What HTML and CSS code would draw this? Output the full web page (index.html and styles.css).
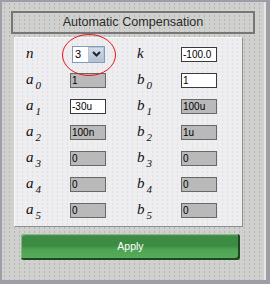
FILE: index.html
```html
<!DOCTYPE html>
<html lang="en">
<head>
    <meta charset="UTF-8">
    <title>Automatic Compensation</title>
    <link rel="stylesheet" href="styles.css">
</head>
<body>
    <div class="frame">
        <div class="title">Automatic Compensation</div>
        <div class="panel">
            <div class="grid">
                <div class="lbl">n</div>
                <div class="select">
                    <span class="val">3</span>
                    <span class="drop">
                        <svg width="9" height="6" viewBox="0 0 9 6"><path d="M1 1 L4.5 4.5 L8 1" fill="none" stroke="#1c2430" stroke-width="2"/></svg>
                    </span>
                </div>
                <div class="lbl">k</div>
                <input class="box" type="text" value="-100.0">

                <div class="lbl">a<sub>0</sub></div>
                <input class="box off" type="text" value="1" readonly>
                <div class="lbl">b<sub>0</sub></div>
                <input class="box" type="text" value="1">

                <div class="lbl">a<sub>1</sub></div>
                <input class="box" type="text" value="-30u">
                <div class="lbl">b<sub>1</sub></div>
                <input class="box off" type="text" value="100u" readonly>

                <div class="lbl">a<sub>2</sub></div>
                <input class="box off" type="text" value="100n" readonly>
                <div class="lbl">b<sub>2</sub></div>
                <input class="box off" type="text" value="1u" readonly>

                <div class="lbl">a<sub>3</sub></div>
                <input class="box off" type="text" value="0" readonly>
                <div class="lbl">b<sub>3</sub></div>
                <input class="box off" type="text" value="0" readonly>

                <div class="lbl">a<sub>4</sub></div>
                <input class="box off" type="text" value="0" readonly>
                <div class="lbl">b<sub>4</sub></div>
                <input class="box off" type="text" value="0" readonly>

                <div class="lbl">a<sub>5</sub></div>
                <input class="box off" type="text" value="0" readonly>
                <div class="lbl">b<sub>5</sub></div>
                <input class="box off" type="text" value="0" readonly>
            </div>
            <!-- red marker round the order selector -->
            <svg class="mark" width="58" height="46" viewBox="0 0 58 46">
                <ellipse cx="29" cy="22" rx="26.5" ry="20.5" fill="none" stroke="#e8141a" stroke-width="1"/>
            </svg>
        </div>
        <button class="apply">Apply</button>
    </div>
</body>
</html>
```

FILE: styles.css
```css
html, body {
    margin: 0;
    padding: 0;
}
body {
    width: 270px;
    height: 284px;
    background-color: #9e9ea6;
    font-family: "Liberation Sans", Arial, sans-serif;
    overflow: hidden;
}
.frame {
    margin: 2px 4px 4px 2px;
    height: 278px;
    padding: 9px 9px 0 9px;
    box-sizing: border-box;
    border-right: 2px solid #e6e6e6;
    background-color: #d0d1cd;
    background-image: radial-gradient(circle, #b3b4c2 0.7px, transparent 1px);
    background-size: 5px 4px;
}
.title {
    height: 23px;
    box-sizing: border-box;
    border: 2px solid #767676;
    text-align: center;
    font-size: 12.6px;
    line-height: 19px;
    color: #2a2a2a;
}
.panel {
    position: relative;
    margin: 3px 12px 0 3px;
    height: 190px;
    box-sizing: border-box;
    border: 1px solid;
    border-color: #f6f6f6 #8e8e8e #8e8e8e #f6f6f6;
    background-color: #eeedf0;
    background-image: radial-gradient(circle, #e0dfe6 0.7px, transparent 1px);
    background-size: 5px 4px;
}
.grid {
    display: grid;
    grid-template-columns: 44px 67px 44px 36px;
    grid-auto-rows: 26px;
    align-items: center;
    padding: 3px 0 0 11px;
}
.lbl {
    font-family: "Liberation Serif", "Times New Roman", serif;
    font-style: italic;
    font-size: 15px;
    color: #111;
    line-height: 16px;
    margin-top: -2px;
}
.lbl sub {
    font-size: 11px;
    vertical-align: -5px;
    margin-left: 2px;
    line-height: 0;
}
.box {
    width: 36px;
    height: 15px;
    box-sizing: border-box;
    padding: 0 1px;
    border: 1px solid #3a3a3a;
    background-color: #fff;
    font-family: "Liberation Sans", Arial, sans-serif;
    font-size: 10px;
    color: #000;
    outline: none;
}
.box.off {
    background-color: #b9b9b9;
    border-color: #686868;
}
.select {
    display: flex;
    align-items: center;
    margin-left: 2px;
    width: 33px;
    height: 17px;
    box-sizing: border-box;
    border: 1px solid #7f9db9;
    background-color: #fff;
}
.select .val {
    flex: 1;
    padding-left: 2px;
    font-size: 11px;
    color: #000;
}
.drop {
    display: flex;
    align-items: center;
    justify-content: center;
    width: 16px;
    height: 15px;
    box-sizing: border-box;
    border: 1px solid #b8c4d8;
    background: linear-gradient(#d6dcea, #b4bfd4);
}
.mark {
    position: absolute;
    left: 45px;
    top: -5px;
}
.apply {
    display: block;
    margin: 7px 0 0 10px;
    width: 219px;
    height: 26px;
    border: none;
    border-radius: 3px;
    background: linear-gradient(#5a9c5e 0%, #3e8a44 10%, #3d8b43 45%, #4fa454 60%, #58ad5c 100%);
    box-shadow: inset -2px -2px 0 #1d4721, inset 1px 1px 0 #86b889;
    color: #fff;
    font-family: "Liberation Sans", Arial, sans-serif;
    font-size: 10.5px;
    padding: 0 0 2px 0;
    cursor: pointer;
}
```
